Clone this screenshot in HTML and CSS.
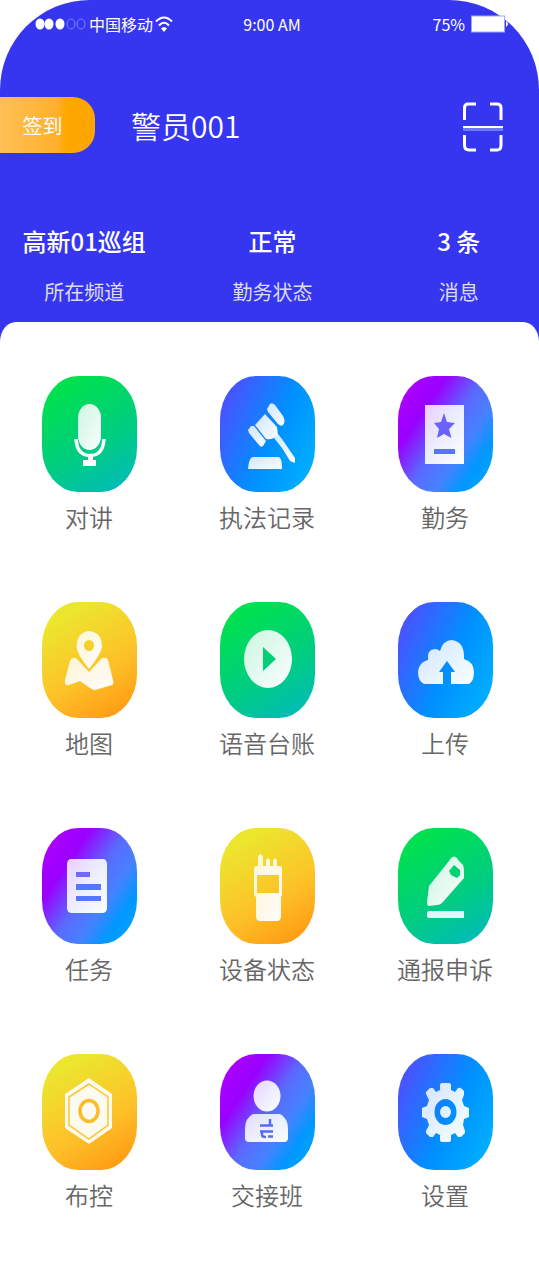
FILE: index.html
```
<!DOCTYPE html>
<html lang="zh-CN">
<head>
<meta charset="UTF-8">
<meta name="viewport" content="width=device-width, initial-scale=1.0">
<title>警员001</title>
<link rel="stylesheet" href="styles.css">
</head>
<body>

<!-- shared icon gradient -->
<svg class="defs" width="0" height="0" aria-hidden="true">
    <defs>
        <linearGradient id="glass" x1="0" y1="0" x2="1" y2="1">
            <stop offset="0" stop-color="#fff" stop-opacity="0.8"/>
            <stop offset="1" stop-color="#fff" stop-opacity="0.98"/>
        </linearGradient>
    </defs>
</svg>

<header class="header">
    <div class="status-bar">
        <div class="carrier">
            <svg width="52" height="14" viewBox="0 0 52 14">
                <g fill="#fff">
                    <ellipse cx="5" cy="7" rx="4.5" ry="5.5"/>
                    <ellipse cx="14" cy="7" rx="4.5" ry="5.5"/>
                    <ellipse cx="25" cy="7" rx="4.5" ry="5.5"/>
                </g>
                <g fill="none" stroke="#7b83fb">
                    <ellipse cx="36" cy="7" rx="4" ry="5"/>
                    <ellipse cx="46" cy="7" rx="4" ry="5"/>
                </g>
            </svg>
            <span>中国移动</span>
            <svg width="18" height="18" viewBox="0 0 18 18">
                <path d="M1 6.500Q9 -1.500 17 6.500M4 10.500Q9 5 14 10.500" fill="none" stroke="#fff" stroke-width="2"/>
                <path d="M6 13.500Q9 10.500 12 13.500L9 17Z" fill="#fff"/>
            </svg>
        </div>
        <div class="time">9:00 AM</div>
        <div class="power">
            <span>75%</span>
            <svg width="38" height="18" viewBox="0 0 38 18">
                <rect x="0.500" y="1" width="33" height="16" fill="#fff" stroke="#9fa5fc"/>
                <path d="M35 6Q39 9 35 12Z" fill="#fff"/>
            </svg>
        </div>
    </div>

    <div class="user-bar">
        <button class="sign-in" type="button">签到</button>
        <h1>警员001</h1>
        <button class="scan" type="button" aria-label="扫一扫">
            <svg width="40" height="54" viewBox="0 0 40 54">
                <g fill="none" stroke="#fff" stroke-width="3">
                    <path d="M1.500 22V10Q1.500 6 5 6H13" />
                    <path d="M27 6H34Q38 6 38 10V22"/>
                    <path d="M1.500 37V47Q1.500 52 6 52H13"/>
                    <path d="M27 52H34Q38 52 38 47V37"/>
                </g>
                <rect y="28" width="40" height="2" fill="#fff"/>
                <rect y="30" width="40" height="3" fill="#6c78f5"/>
            </svg>
        </button>
    </div>

    <div class="stats">
        <div class="stat">
            <strong>高新01巡组</strong>
            <span>所在频道</span>
        </div>
        <div class="stat">
            <strong>正常</strong>
            <span>勤务状态</span>
        </div>
        <div class="stat">
            <strong>3 条</strong>
            <span>消息</span>
        </div>
    </div>
</header>

<main class="menu">
    <a class="item" href="#">
        <svg class="tile green" viewBox="0 0 95 116">
            <rect x="36" y="28" width="23" height="46" rx="11.500" ry="14" fill="url(#glass)"/>
            <path d="M34 63Q35 79.500 48 79.500Q61 79.500 62 63" fill="none" stroke="#fff" stroke-width="3.500"/>
            <path d="M46 80h5v4h3v6H41v-6h5z" fill="#fff"/>
        </svg>
        <span>对讲</span>
    </a>
    <a class="item" href="#">
        <svg class="tile blue" viewBox="0 0 95 116">
            <g fill="url(#glass)">
                <path d="M47 33L50 28Q52 26 55 29L63 40Q66 46 63 49Q61 51 58 48L48 36Z"/>
                <path d="M45 38L35 49L46 63Q50 64 54 62L58 59L57 51Z"/>
                <path d="M28 54L31 50L34 50L46 65L43 70Q41 72 39 69L29 57Z"/>
                <path d="M54 62L58 58L62 63L75 82V87L70 85L62 72Z"/>
                <path d="M33 81H59Q62 82 62 93H28Q29 81 33 81Z"/>
            </g>
        </svg>
        <span>执法记录</span>
    </a>
    <a class="item" href="#">
        <svg class="tile purple" viewBox="0 0 95 116">
            <rect x="27" y="29" width="39" height="59" fill="url(#glass)"/>
            <path d="M46 37L49 46L57 47L51 53L53.500 62L46 58L39 62L41 53L36 47L43 46Z" fill="#6a62ff"/>
            <rect x="36" y="73" width="21" height="5" fill="#5a74fd"/>
        </svg>
        <span>勤务</span>
    </a>

    <a class="item" href="#">
        <svg class="tile yellow" viewBox="0 0 95 116">
            <path d="M47 29Q60 30 60 45Q59 52 47 67Q35 52 34.500 45Q35 30 47 29ZM47 38A5 5.500 0 1 0 47 49A5 5.500 0 1 0 47 38Z" fill="url(#glass)" fill-rule="evenodd"/>
            <path d="M28 59Q30 55 34 56L47 70L60 56Q65 55 66 58L71 78Q72 82 70 83L53 88Q51 88 48 86L38 79L27 83Q22 84 23 78Z" fill="url(#glass)"/>
        </svg>
        <span>地图</span>
    </a>
    <a class="item" href="#">
        <svg class="tile green" viewBox="0 0 95 116">
            <path d="M48 28A24 29 0 1 0 48 86A24 29 0 1 0 48 28ZM43 45L56 57L43 69Z" fill="url(#glass)" fill-rule="evenodd"/>
        </svg>
        <span>语音台账</span>
    </a>
    <a class="item" href="#">
        <svg class="tile blue" viewBox="0 0 95 116">
            <path d="M26 82Q20 79 20 70Q21 60 30 58Q29 47 37 47Q40 47 42 49Q45 38 54 38Q67 40 66 57Q76 60 76 70Q76 79 71 82H53V70H57L49 59L41 70H45V82Z" fill="url(#glass)"/>
        </svg>
        <span>上传</span>
    </a>

    <a class="item" href="#">
        <svg class="tile purple" viewBox="0 0 95 116">
            <rect x="25" y="31" width="40" height="54" rx="4" ry="5" fill="url(#glass)"/>
            <path d="M34 44H48V49H34Z" fill="#7068ff"/>
            <path d="M34 56H59V62H34ZM34 68H59V73H34Z" fill="#5577ff"/>
        </svg>
        <span>任务</span>
    </a>
    <a class="item" href="#">
        <svg class="tile yellow" viewBox="0 0 95 116">
            <path d="M38 38V29Q40 23 43 29V38H46V32L48 30L50 32V38H53V32L55 30L57 32V38H60Q62 38 62 41V67L61 69V88Q61 93 57 93H40Q36 93 36 88V69L34 67V41Q34 38 36 38ZM37 47V65H59V47Z" fill="url(#glass)" fill-rule="evenodd"/>
        </svg>
        <span>设备状态</span>
    </a>
    <a class="item" href="#">
        <svg class="tile green" viewBox="0 0 95 116">
            <path d="M51 33L53 30Q56 27 59 30L61 33L65 37Q66 38 66 50L44 75Q42 77 39 77L31 78Q29 78 29 74L31 58ZM56 37L51 43L53 47L59 50L62 47V42Z" fill="url(#glass)" fill-rule="evenodd"/>
            <path d="M31 83H66V90H31Q29 90 29 88V85Q29 83 31 83Z" fill="#e4f5fa"/>
        </svg>
        <span>通报申诉</span>
    </a>

    <a class="item" href="#">
        <svg class="tile yellow" viewBox="0 0 95 116">
            <path d="M47 24L70 40V74L47 90L23 74V40Z" fill="#fdfaf0"/>
            <path d="M47 30L66 43V71L47 85L27 71V43Z" fill="none" stroke="#fbc62c" stroke-width="1.500"/>
            <ellipse cx="47" cy="57" rx="9" ry="10.500" fill="none" stroke="#fcbb28" stroke-width="3.500"/>
        </svg>
        <span>布控</span>
    </a>
    <a class="item" href="#">
        <svg class="tile purple" viewBox="0 0 95 116">
            <ellipse cx="47" cy="42" rx="13.500" ry="15.500" fill="url(#glass)"/>
            <path d="M33 60H60Q68 64 68 75V84Q68 88 64 88H29Q25 88 25 84V75Q25 64 33 60Z" fill="url(#glass)"/>
            <path d="M40 71.500H53M50 65V71M40 77.500H53M42 78V81Q42 83 46 83M48 82.500H53" fill="none" stroke="#566cf9" stroke-width="2.500"/>
        </svg>
        <span>交接班</span>
    </a>
    <a class="item" href="#">
        <svg class="tile blue" viewBox="0 0 95 116">
            <path d="M42 36V31Q42 29 44 29H51Q53 29 53 31V36L57 38L60 34Q62 33 64 35L66 37V41L64 46L66 52L71 54V63L66 65L65 71L67 77V79L63 83H60L57 79L53 81V86Q53 88 51 88H44Q42 88 42 86V81L38 79L35 83H32L28 79V77L31 71L29 65L24 63V54L29 52L31 46L28 40V38L32 34H35L38 38ZM47.500 45A11 13 0 1 0 47.500 71A11 13 0 1 0 47.500 45ZM47.500 52A5.500 6 0 1 1 47.500 64A5.500 6 0 1 1 47.500 52Z" fill="url(#glass)" fill-rule="evenodd"/>
        </svg>
        <span>设置</span>
    </a>
</main>

</body>
</html>
```
FILE: styles.css
```
* {
    box-sizing: border-box;
}

body {
    font-family: "Noto Sans CJK SC", sans-serif;
    margin: 0;
    background-color: #fff;
    color: #fff;
}

.defs {
    position: absolute;
}

svg {
    display: block;
    flex-shrink: 0;
}

button {
    font-family: inherit;
    border: 0;
    padding: 0;
    color: #fff;
    cursor: pointer;
}

/* header */
.header {
    background-color: #3636f0;
    border-radius: 90px 90px 0 0;
    padding: 12px 0 34px;
}

.status-bar {
    display: grid;
    grid-template-columns: 1fr auto 1fr;
    align-items: center;
    padding: 0 30px 0 35px;
    font-size: 16px;
    line-height: 24px;
}

.carrier,
.power {
    display: flex;
    align-items: center;
}

.carrier {
    gap: 2px;
}

.power {
    justify-content: flex-end;
    gap: 6px;
}

.user-bar {
    display: flex;
    align-items: center;
    margin-top: 61px;
    padding-right: 36px;
}

.sign-in {
    width: 95px;
    height: 56px;
    padding-right: 10px;
    border-radius: 0 22px 22px 0;
    background: linear-gradient(90deg, #ffc054, #ffb02c 60%, #ffa600 70%);
    font-size: 20px;
}

.user-bar h1 {
    flex: 1;
    margin: 0 0 0 36px;
    font-size: 30px;
    font-weight: 350;
    line-height: 40px;
}

.scan {
    background: none;
}

.stats {
    display: grid;
    grid-template-columns: 41fr 53fr 40fr;
    margin-top: 68px;
    padding-left: 2px;
    text-align: center;
}

.stat strong,
.stat span {
    display: block;
}

.stat strong {
    font-size: 24px;
    font-weight: 500;
    line-height: 40px;
}

.stat span {
    margin-top: 11px;
    font-size: 20px;
    line-height: 40px;
    color: #dcdcec;
}

/* menu */
.menu {
    display: grid;
    grid-template-columns: repeat(3, 1fr);
    row-gap: 60px;
    margin-top: -24px;
    padding: 54px 5px 50px 0;
    background-color: #fff;
    border-radius: 16px 16px 0 0 / 20px 20px 0 0;
}

.item {
    display: flex;
    flex-direction: column;
    align-items: center;
    color: #666;
    font-size: 24px;
    font-weight: 350;
    line-height: 50px;
    text-decoration: none;
}

.tile {
    width: 95px;
    height: 116px;
    border-radius: 36px / 44px;
}

.green {
    background: linear-gradient(150deg, #00e050 15%, #00cc82 60%, #00b8c4);
}

.blue {
    background: linear-gradient(115deg, #4a52ff 10%, #0090ff 55%, #00b6ff);
}

.purple {
    background: linear-gradient(124deg, #ab00ff 10%, #9a00ff 28%, #5a6aff 50%, #4682ff 66%, #0098ff 80%, #00aaff);
}

.yellow {
    background: linear-gradient(150deg, #ece62e 15%, #fdc128 60%, #ff9812 95%);
}
```
